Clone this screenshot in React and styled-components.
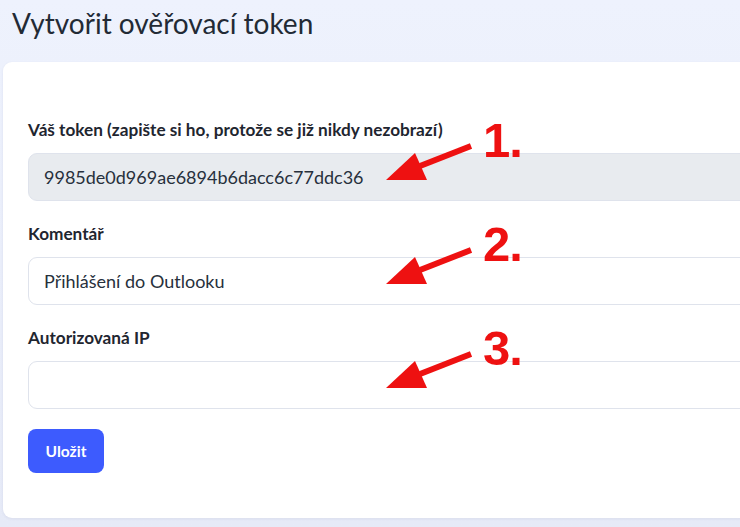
import React from "react";
import styled, { createGlobalStyle } from "styled-components";

const GlobalStyle = createGlobalStyle`
  html, body {
    margin: 0;
    padding: 0;
    overflow: hidden;
  }
  body {
    font-family: Lato, "Noto Sans", sans-serif;
    background: linear-gradient(180deg, #eef2fd 0%, #e6eaf7 100%);
    min-height: 527px;
  }
`;

const Page = styled.div`
  display: flex;
  flex-direction: column;
  padding-left: 3px;
  width: 800px;
`;

const Title = styled.h1`
  margin: 0;
  padding: 4px 0 0 9px;
  height: 58px;
  font-size: 28px;
  font-weight: 400;
  line-height: 38px;
  color: #222a35;
`;

const Card = styled.div`
  display: flex;
  flex-direction: column;
  align-items: flex-start;
  gap: 22px;
  background: #fff;
  border-radius: 9px;
  padding: 57px 24px 45px 25px;
  box-shadow: 0 1px 3px rgba(60, 70, 120, 0.08);
`;

const Field = styled.div`
  position: relative;
  align-self: stretch;
  display: flex;
  flex-direction: column;
  gap: 12px;
`;

const Label = styled.label`
  font-size: 17.2px;
  font-weight: 700;
  line-height: 22px;
  color: #1f2630;
`;

const Input = styled.div`
  box-sizing: border-box;
  height: 48px;
  border: 1px solid #dfe3ec;
  border-radius: 9px;
  background: ${(p) => (p.$readOnly ? "#e8ebef" : "#fff")};
  padding: 0 15px;
  display: flex;
  align-items: center;
  font-size: 18px;
  color: #27303c;
`;

const Button = styled.button`
  margin-top: -2px;
  width: 76px;
  height: 44px;
  border: none;
  border-radius: 8px;
  background: #3d5bfe;
  color: #fff;
  font-family: inherit;
  font-size: 15.5px;
  font-weight: 700;
`;

const Note = styled.div`
  position: absolute;
  left: 352px;
  top: -3px;
  width: 160px;
  height: 70px;
  pointer-events: none;
`;

const Arrow = styled.svg`
  position: absolute;
  left: 0;
  top: 24px;
`;

const Number = styled.span`
  position: absolute;
  left: 103px;
  top: 0;
  font-family: "Liberation Sans", Arial, sans-serif;
  font-size: 49px;
  font-weight: 700;
  line-height: 1;
  color: #ee1111;
  letter-spacing: -1px;
`;

function Annotation({ n }) {
  return (
    <Note>
      <Arrow width="100" height="44" viewBox="0 0 100 44">
        <line x1="40" y1="26" x2="91" y2="6" stroke="#ee1111" strokeWidth="6" />
        <polygon points="6,40 35,13 47,40" fill="#ee1111" />
      </Arrow>
      <Number>{n}.</Number>
    </Note>
  );
}

export default function App() {
  return (
    <Page>
      <GlobalStyle />
      <Title>Vytvořit ověřovací token</Title>
      <Card>
        <Field>
          <Label>Váš token (zapište si ho, protože se již nikdy nezobrazí)</Label>
          <Input $readOnly>9985de0d969ae6894b6dacc6c77ddc36</Input>
          <Annotation n={1} />
        </Field>
        <Field>
          <Label>Komentář</Label>
          <Input>Přihlášení do Outlooku</Input>
          <Annotation n={2} />
        </Field>
        <Field>
          <Label>Autorizovaná IP</Label>
          <Input />
          <Annotation n={3} />
        </Field>
        <Button>Uložit</Button>
      </Card>
    </Page>
  );
}
